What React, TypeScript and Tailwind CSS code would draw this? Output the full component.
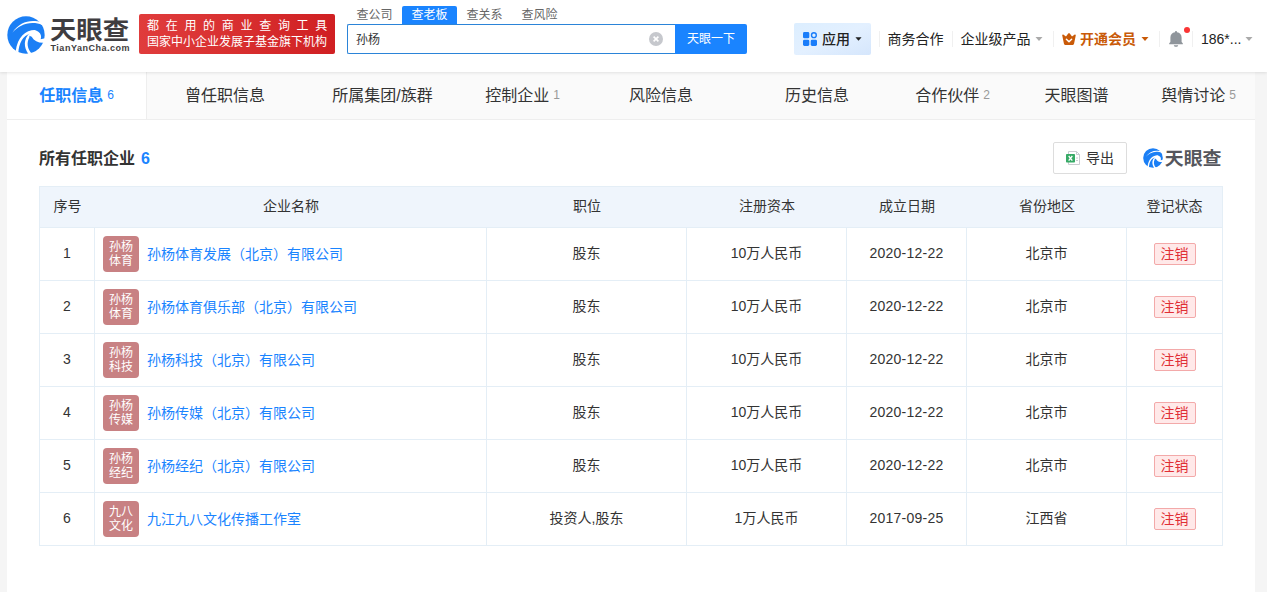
import { twMerge } from "tailwind-merge";

const searchTabs = ["查公司", "查老板", "查关系", "查风险"];

const tabs = [
	{ label: "任职信息", count: 6, width: "w-[139px]" },
	{ label: "曾任职信息", width: "w-[156px]" },
	{ label: "所属集团/族群", width: "w-[159px]" },
	{ label: "控制企业", count: 1, width: "w-[121px]" },
	{ label: "风险信息", width: "w-[156px]" },
	{ label: "历史信息", width: "w-[156px]" },
	{ label: "合作伙伴", count: 2, width: "w-[115px]" },
	{ label: "天眼图谱", width: "w-[133px]" },
	{ label: "舆情讨论", count: 5, width: "w-[111px]" },
];

const columns = [
	{ label: "序号", width: "w-[55px]" },
	{ label: "企业名称", width: "w-[392px]" },
	{ label: "职位", width: "w-[200px]" },
	{ label: "注册资本", width: "w-[160px]" },
	{ label: "成立日期", width: "w-[120px]" },
	{ label: "省份地区", width: "w-[160px]" },
	{ label: "登记状态", width: "w-[96px]" },
];

const companies = [
	{ name: "孙杨体育发展（北京）有限公司", logo: ["孙杨", "体育"], role: "股东", capital: "10万人民币", date: "2020-12-22", area: "北京市" },
	{ name: "孙杨体育俱乐部（北京）有限公司", logo: ["孙杨", "体育"], role: "股东", capital: "10万人民币", date: "2020-12-22", area: "北京市" },
	{ name: "孙杨科技（北京）有限公司", logo: ["孙杨", "科技"], role: "股东", capital: "10万人民币", date: "2020-12-22", area: "北京市" },
	{ name: "孙杨传媒（北京）有限公司", logo: ["孙杨", "传媒"], role: "股东", capital: "10万人民币", date: "2020-12-22", area: "北京市" },
	{ name: "孙杨经纪（北京）有限公司", logo: ["孙杨", "经纪"], role: "股东", capital: "10万人民币", date: "2020-12-22", area: "北京市" },
	{ name: "九江九八文化传播工作室", logo: ["九八", "文化"], role: "投资人,股东", capital: "1万人民币", date: "2017-09-25", area: "江西省" },
];

function LogoMark({ className }: { className?: string }) {
	return (
		<svg viewBox="0 0 114 114" className={className} aria-hidden="true">
			<circle cx="57" cy="57" r="56" fill="#1b7ff5" />
			<g fill="#fff">
				{/* upper feather */}
				<path d="M16 50C32 26 54 15 78 15c10 0 17 1 22 3l8 2-2 8C96 22 88 21 76 21 52 22 32 32 16 50Z" />
				{/* wing edge running down to the rim */}
				<path d="M88 42C58 40 32 60 26 106l8 5C36 82 46 60 72 52Z" />
				{/* eye opening */}
				<path d="M64 58C70 44 84 39 94 47c8 6 10 14 7 23l13-3v13C96 82 82 76 74 62Z" />
				{/* inner feather */}
				<path d="M68 52C49 70 50 94 64 114h11C61 98 58 82 67 64Z" />
			</g>
		</svg>
	);
}

function Wordmark({ className, fill }: { className?: string; fill: string }) {
	return (
		<svg viewBox="0 0 82 36" preserveAspectRatio="none" className={className}>
			<text
				x="1"
				y="27"
				fontSize="24.5"
				fontWeight="700"
				fontFamily="'Noto Sans CJK SC', sans-serif"
				textLength="79"
				lengthAdjust="spacingAndGlyphs"
				fill={fill}
			>
				天眼查
			</text>
		</svg>
	);
}

function Caret({ className }: { className?: string }) {
	return (
		<svg viewBox="0 0 8 4" className={twMerge("h-1 w-2 shrink-0", className)} aria-hidden="true">
			<path d="M0.5 0h7L4 4Z" fill="currentColor" />
		</svg>
	);
}

function Divider({ className }: { className?: string }) {
	return <span className={twMerge("h-4 w-px shrink-0 bg-[#f0f0f0]", className)} />;
}

function SearchBox() {
	return (
		<div className="ml-3 flex w-[400px] flex-col pt-1.5">
			<div className="flex h-[18px] text-xs leading-[18px] text-[#666]">
				{searchTabs.map((label) => (
					<span
						key={label}
						className={twMerge(
							"w-[55px] text-center",
							label === "查老板" && "rounded-t-xs bg-[#1a84ff] text-white",
						)}
					>
						{label}
					</span>
				))}
			</div>
			<div className="flex h-[30px]">
				<div className="flex flex-1 items-center justify-between rounded-l-xs border border-r-0 border-[#2b84d8] bg-white pr-3 pl-2 text-xs text-[#333]">
					<span className="pt-px">孙杨</span>
					<svg viewBox="0 0 14 14" className="size-3.5" aria-hidden="true">
						<circle cx="7" cy="7" r="7" fill="#c6c8cd" />
						<path d="m4.6 4.6 4.8 4.8m0-4.8L4.6 9.4" stroke="#fff" strokeWidth="1.6" />
					</svg>
				</div>
				<button type="button" className="w-[72px] rounded-r-xs bg-[#1a84ff] text-xs text-white">
					天眼一下
				</button>
			</div>
		</div>
	);
}

function Header() {
	return (
		<header className="relative z-10 flex h-[72px] bg-white pl-[7px] shadow-[0_1px_3px_rgba(0,0,0,0.1)]">
			<LogoMark className="mt-4 size-[38px]" />
			<div className="ml-1 w-[83px] pt-3">
				<Wordmark className="h-9 w-[82px]" fill="#3f3d40" />
				<svg viewBox="0 0 82 12" className="-mt-1.5 h-3 w-[82px]">
					<text
						x="1.5"
						y="9"
						fontSize="9"
						fontWeight="700"
						fontFamily="'Liberation Sans', sans-serif"
						textLength="79"
						fill="#3f3d40"
					>
						TianYanCha.com
					</text>
				</svg>
			</div>
			<div className="mt-3.5 ml-[7px] flex h-10 w-[196px] flex-col rounded-xs bg-linear-to-r from-[#e03c3c] to-[#d01f22] pt-1 pl-2 text-xs leading-4 text-white">
				<span className="tracking-[6.7px] whitespace-nowrap">都在用的商业查询工具</span>
				<span className="whitespace-nowrap">国家中小企业发展子基金旗下机构</span>
			</div>
			<SearchBox />
			<nav className="mt-[23px] ml-[47px] flex h-8 items-center text-sm text-[#222]">
				<div className="flex h-8 w-[77px] items-center rounded-xs bg-linear-to-br from-[#dceeff] via-[#e3f0ff] to-[#d5e6fc] pl-[9px] font-medium">
					<svg viewBox="0 0 14 14" className="size-3.5" fill="#1a7dfa" aria-hidden="true">
						<rect width="6.3" height="6.3" rx="1.4" />
						<rect y="7.7" width="6.3" height="6.3" rx="1.4" />
						<rect x="7.7" y="7.7" width="6.3" height="6.3" rx="1.4" />
						<circle cx="10.9" cy="3.2" r="2.4" fill="none" stroke="#1a7dfa" strokeWidth="1.4" />
					</svg>
					<span className="ml-[5px]">应用</span>
					<Caret className="ml-[5px] w-[7px]" />
				</div>
				<Divider className="ml-2" />
				<span className="ml-[7.5px]">商务合作</span>
				<Divider className="ml-2" />
				<span className="ml-2">企业级产品</span>
				<Caret className="ml-1 text-[#aaa]" />
				<Divider className="ml-2.5" />
				<div className="ml-[8.5px] flex items-center font-bold text-[#c95a08]">
					<svg viewBox="0 0 14 12" className="h-3 w-3.5" aria-hidden="true">
						<path
							d="M.3 2.7C-.1 1.5 1 1.2 1.6 1.8L4 3.4 6.2.6c.4-.6 1.2-.6 1.6 0L10 3.4l2.4-1.6c.7-.6 1.7-.2 1.3.9l-1.6 7.8c-.2.9-.7 1.5-1.6 1.5h-7c-.9 0-1.4-.6-1.6-1.5Z"
							fill="currentColor"
						/>
						<path
							d="m4.4 6.2 2.6 2.6 2.6-2.6"
							fill="none"
							stroke="#fff"
							strokeWidth="1.5"
							strokeLinecap="round"
							strokeLinejoin="round"
						/>
					</svg>
					<span className="ml-1">开通会员</span>
					<Caret className="ml-[5px]" />
				</div>
				<Divider className="ml-2.5" />
				<div className="relative ml-[9px]">
					<svg viewBox="0 0 14 16" className="h-4 w-3.5" fill="#8f959b" aria-hidden="true">
						<path d="M6 1.2C6 .4 6.4 0 7 0s1 .4 1 1.2c2.9.4 4.6 2.5 4.6 5.2v4.6l1.2 1.2v1.1H.2v-1.1l1.2-1.2V6.4c0-2.7 1.7-4.8 4.6-5.2Z" />
						<path d="M4.8 14.3h4.4c-.2 1-1 1.5-2.2 1.5s-2-.5-2.2-1.5Z" />
					</svg>
					<span className="absolute -top-1 left-[15px] size-1.5 rounded-full bg-[#fa3535]" />
				</div>
				<Divider className="ml-[9px]" />
				<span className="ml-2">186*...</span>
				<Caret className="ml-1 text-[#aaa]" />
			</nav>
		</header>
	);
}

function TabBar() {
	return (
		<div className="flex h-12 border-b border-[#eee] bg-[#fafafa]">
			{tabs.map((tab, i) => (
				<div
					key={tab.label}
					className={twMerge(
						"flex shrink-0 items-center justify-center text-base text-[#333]",
						tab.width,
						i === 0 && "box-content border-r border-[#eee] bg-white font-bold text-[#1a84ff]",
					)}
				>
					<span>{tab.label}</span>
					{tab.count && (
						<span
							className={twMerge(
								"ml-1 pb-0.5 text-xs font-normal text-[#999]",
								i === 0 && "text-[#1a84ff]",
							)}
						>
							{tab.count}
						</span>
					)}
				</div>
			))}
		</div>
	);
}

function CompanyTable() {
	return (
		<table className="w-[1184px] table-fixed border-separate border-spacing-0 border-t border-l border-[#e4eef6] text-center text-sm text-[#333]">
			<thead>
				<tr className="h-[41px] bg-[#eff5fc]">
					{columns.map((col, i) => (
						<th
							key={col.label}
							className={twMerge(
								"border-b border-[#e4eef6] p-0 pb-0.5 font-normal",
								col.width,
								i === columns.length - 1 && "border-r",
							)}
						>
							{col.label}
						</th>
					))}
				</tr>
			</thead>
			<tbody className="[&_td]:border-r [&_td]:border-b [&_td]:border-[#e4eef6] [&_td]:p-0">
				{companies.map((company, i) => (
					<tr key={company.name} className="h-[53px]">
						<td>
							<div className="pb-0.5">{i + 1}</div>
						</td>
						<td>
							<div className="flex items-center pl-2">
								<div className="flex size-9 flex-col justify-center rounded bg-[#c88183] text-xs leading-3.5 text-white">
									<span>{company.logo[0]}</span>
									<span>{company.logo[1]}</span>
								</div>
								<a href="#" className="ml-2 text-[#1a84ff]">
									{company.name}
								</a>
							</div>
						</td>
						<td>
							<div className="pb-0.5">{company.role}</div>
						</td>
						<td>
							<div className="pb-0.5">{company.capital}</div>
						</td>
						<td>
							<div className="pb-0.5 tracking-[0.22px]">{company.date}</div>
						</td>
						<td>
							<div className="pb-0.5">{company.area}</div>
						</td>
						<td>
							<div className="flex justify-center">
								<span className="h-[22px] w-[42px] rounded-xs border border-[#f3a9a9] bg-[#ffe9e9] leading-5 text-[#e02f35]">
									注销
								</span>
							</div>
						</td>
					</tr>
				))}
			</tbody>
		</table>
	);
}

export default function App() {
	return (
		<div className="h-[592px] w-[1267px] overflow-hidden bg-[#f5f5f5] font-['Liberation_Sans','Noto_Sans_CJK_SC',sans-serif]">
			<Header />
			<main className="ml-[7px] h-[520px] w-[1248px] bg-white">
				<TabBar />
				<section className="px-8 pt-[22px]">
					<div className="mb-3 flex h-8 items-center">
						<h2 className="pt-0.5 text-base font-bold text-[#333]">
							所有任职企业<span className="ml-1.5 text-[#1a84ff]">6</span>
						</h2>
						<button
							type="button"
							className="ml-auto flex h-8 w-[74px] items-center rounded-xs border border-[#ddd] pl-3 text-sm text-[#333]"
						>
							<svg viewBox="0 0 14 14" className="size-3.5" aria-hidden="true">
								<path d="M2.5.5h8l3 3v10h-11Z" fill="#fff" stroke="#c9ccd1" />
								<path d="M10.5.5v3h3M10 7h2M10 9.5h2" fill="none" stroke="#c9ccd1" />
								<rect y="3" width="9" height="8.5" rx=".8" fill="#37aa66" />
								<path d="m2.7 5 3.6 4.6m0-4.6L2.7 9.6" stroke="#fff" strokeWidth="1.3" />
							</svg>
							<span className="ml-1.5">导出</span>
						</button>
						<LogoMark className="ml-4 size-5" />
						<Wordmark className="ml-px h-[26px] w-[59px]" fill="#55565c" />
					</div>
					<CompanyTable />
				</section>
			</main>
		</div>
	);
}
